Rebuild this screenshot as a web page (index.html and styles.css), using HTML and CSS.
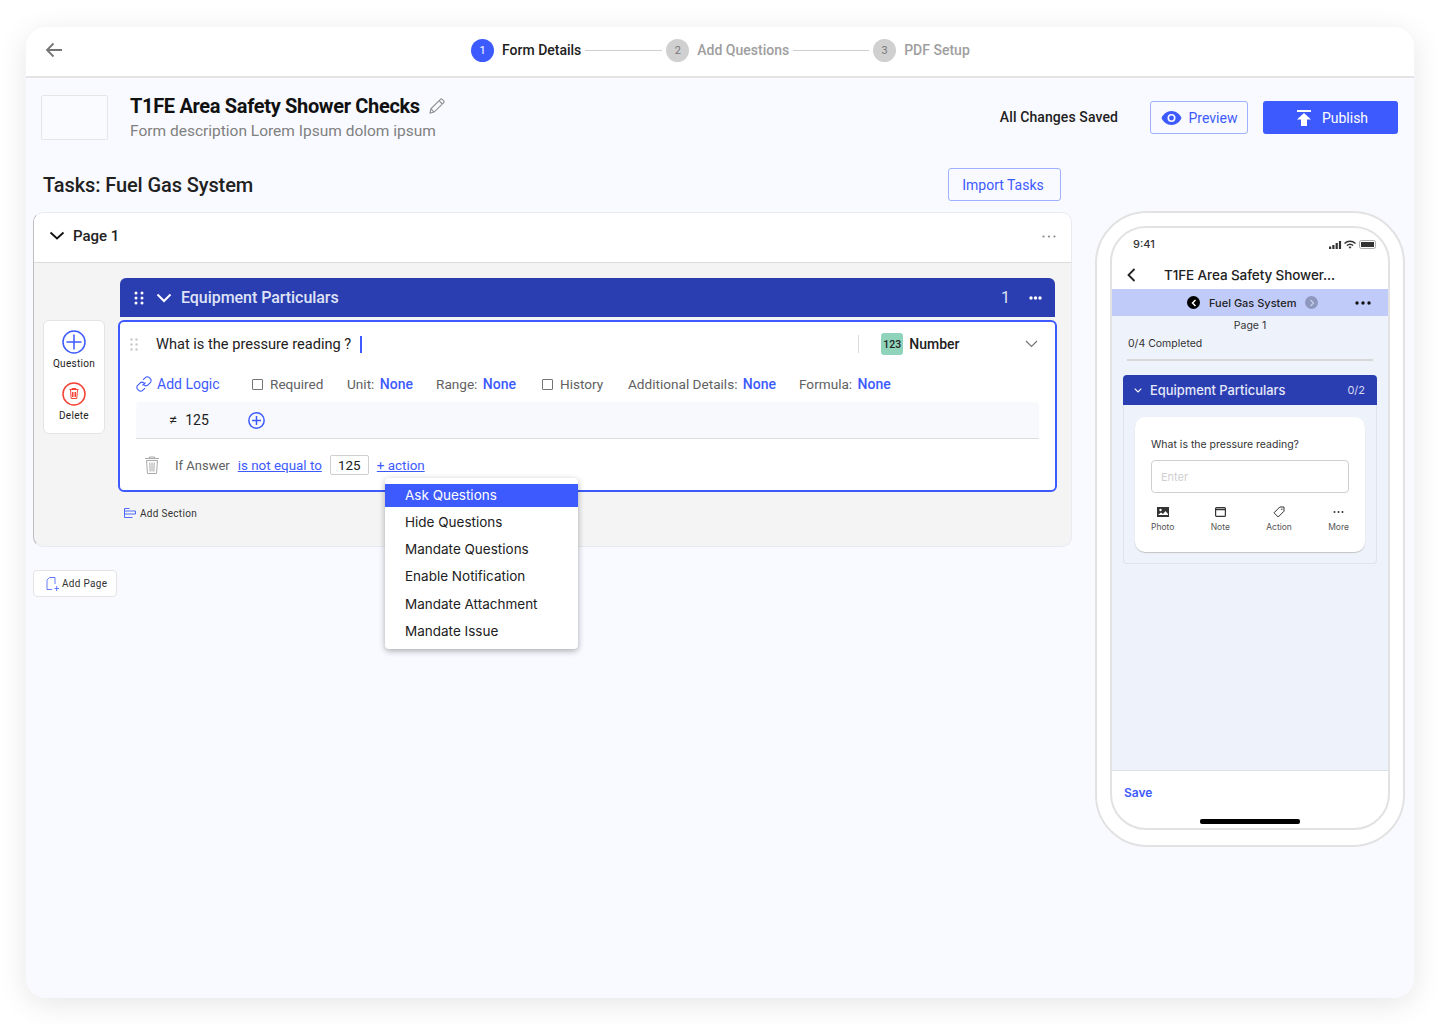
FILE: index.html
```html
<!DOCTYPE html>
<html lang="en">
<head>
<meta charset="utf-8">
<title>Form Builder</title>
<link rel="stylesheet" href="styles.css">
</head>
<body>
<div class="window">
  <header class="topbar">
    <svg class="back" viewBox="0 0 18 16" width="18" height="16"><path d="M17 8H2M8.500 1.500 2 8l6.500 6.500" fill="none" stroke="#757575" stroke-width="1.800"/></svg>
    <div class="stepper">
      <span class="num num-on">1</span><span class="step-on">Form Details</span><span class="line"></span>
      <span class="num">2</span><span class="step-off">Add Questions</span><span class="line line-b"></span>
      <span class="num">3</span><span class="step-off">PDF Setup</span>
    </div>
  </header>

  <section class="formhead">
    <div class="logo"></div>
    <div class="titles">
      <div class="title-row">
        <h1>T1FE Area Safety Shower Checks</h1>
        <svg width="16" height="16" viewBox="0 0 16 16"><path d="M1 15l.9-4.200L11.400 1.300a1.300 1.300 0 0 1 1.800 0l1.500 1.500a1.300 1.300 0 0 1 0 1.800L5.200 14.100zM1.900 10.800l3.300 3.300M10 2.700l3.300 3.300" fill="none" stroke="#8f8f8f" stroke-width="1.100"/></svg>
      </div>
      <p>Form description Lorem Ipsum dolom ipsum</p>
    </div>
    <div class="saved">All Changes Saved</div>
    <button class="btn-outline preview">
      <svg width="21" height="14" viewBox="0 0 21 14"><path d="M10.500 0C6 0 2.200 2.900.500 7c1.700 4.100 5.500 7 10 7s8.300-2.900 10-7c-1.700-4.100-5.500-7-10-7z" fill="#3d5afe"/><circle cx="10.500" cy="7" r="4" fill="#f9faff"/><circle cx="10.500" cy="7" r="2.400" fill="#3d5afe"/></svg>
      Preview
    </button>
    <button class="btn-solid">
      <svg width="14" height="16" viewBox="0 0 14 16"><path d="M0 0h14v2H0zM7 3l7 6.500H10V16H4V9.500H0z" fill="#fff"/></svg>
      Publish
    </button>
  </section>

  <div class="workspace">
    <main class="builder">
      <div class="tasks-row">
        <h2>Tasks: Fuel Gas System</h2>
        <button class="btn-outline import">Import Tasks</button>
      </div>

      <section class="page-card">
        <div class="page-head">
          <svg width="16" height="10" viewBox="0 0 16 10"><path d="M1.500 1.500 8 7.500l6.500-6" fill="none" stroke="#111" stroke-width="1.800"/></svg>
          <span class="page-name">Page 1</span>
          <svg width="14" height="3" viewBox="0 0 14 3" fill="#8a8a8a"><circle cx="1.500" cy="1.500" r="1.100"/><circle cx="7" cy="1.500" r="1.100"/><circle cx="12.500" cy="1.500" r="1.100"/></svg>
        </div>
        <div class="page-body">
          <aside class="tools">
            <div class="tool">
              <svg width="24" height="24" viewBox="0 0 24 24"><circle cx="12" cy="12" r="11" fill="none" stroke="#3d5afe" stroke-width="1.500"/><path d="M12 4.500v15M4.500 12h15" stroke="#3d5afe" stroke-width="1.500"/></svg>
              <span>Question</span>
            </div>
            <div class="tool">
              <svg width="24" height="24" viewBox="0 0 24 24"><circle cx="12" cy="12" r="11" fill="none" stroke="#f44336" stroke-width="1.500"/><path d="M7.500 7.500h9M8.500 7.500l.7 9h5.600l.7-9M10.500 10v5M12 10v5M13.500 10v5M10 7.500V6.500h4v1" fill="none" stroke="#f44336" stroke-width="1"/></svg>
              <span>Delete</span>
            </div>
          </aside>

          <div class="sections">
            <div class="section-head">
              <svg width="10" height="14" viewBox="0 0 10 14" fill="#fff"><circle cx="2" cy="2" r="1.500"/><circle cx="8" cy="2" r="1.500"/><circle cx="2" cy="7" r="1.500"/><circle cx="8" cy="7" r="1.500"/><circle cx="2" cy="12" r="1.500"/><circle cx="8" cy="12" r="1.500"/></svg>
              <svg class="sec-chev" width="16" height="10" viewBox="0 0 16 10"><path d="M1.500 1.500 8 8l6.500-6.500" fill="none" stroke="#fff" stroke-width="2"/></svg>
              <span class="sec-title">Equipment Particulars</span>
              <span class="sec-count">1</span>
              <svg width="13" height="4" viewBox="0 0 13 4" fill="#fff"><circle cx="2" cy="2" r="1.700"/><circle cx="6.500" cy="2" r="1.700"/><circle cx="11" cy="2" r="1.700"/></svg>
            </div>

            <div class="question">
              <div class="q-row">
                <svg width="8" height="13" viewBox="0 0 8 13" fill="#c9c9c9"><circle cx="1.500" cy="1.500" r="1.200"/><circle cx="6.500" cy="1.500" r="1.200"/><circle cx="1.500" cy="6.500" r="1.200"/><circle cx="6.500" cy="6.500" r="1.200"/><circle cx="1.500" cy="11.500" r="1.200"/><circle cx="6.500" cy="11.500" r="1.200"/></svg>
                <span class="q-text">What is the pressure reading ?</span>
                <span class="caret"></span>
                <span class="q-sep"></span>
                <span class="badge">123</span>
                <span class="q-type">Number</span>
                <svg width="13" height="8" viewBox="0 0 13 8"><path d="M1 1l5.500 5.500L12 1" fill="none" stroke="#757575" stroke-width="1.200"/></svg>
              </div>

              <div class="opts">
                <span class="addlogic">
                  <svg width="16" height="16" viewBox="0 0 16 16"><path d="M6.500 9.500 9.500 6.500M7 3.800 9.300 1.600a2.800 2.800 0 0 1 4 0l1 1a2.800 2.800 0 0 1 0 4l-2.300 2.300a2.800 2.800 0 0 1-3.800.1M9 12.200l-2.300 2.200a2.800 2.800 0 0 1-4 0l-1-1a2.800 2.800 0 0 1 0-4L4 7.100a2.800 2.800 0 0 1 3.800-.1" fill="none" stroke="#3d5afe" stroke-width="1.100"/></svg>
                  Add Logic
                </span>
                <label class="opt req"><i class="check"></i>Required</label>
                <span class="opt unit">Unit: <b>None</b></span>
                <span class="opt range">Range: <b>None</b></span>
                <label class="opt hist"><i class="check"></i>History</label>
                <span class="opt addl">Additional Details: <b>None</b></span>
                <span class="opt">Formula: <b>None</b></span>
              </div>

              <div class="logic-strip">
                <span class="ne">≠</span>
                <span class="logic-val">125</span>
                <svg width="17" height="17" viewBox="0 0 16 16"><circle cx="8" cy="8" r="7.200" fill="none" stroke="#3d5afe" stroke-width="1.400"/><path d="M8 3.800v8.400M3.800 8h8.400" stroke="#3d5afe" stroke-width="1.400"/></svg>
              </div>

              <div class="rule">
                <svg width="16" height="18" viewBox="0 0 16 18"><path d="M1 2.500h14M2.500 4.500l1 13h9l1-13zM5.800 6.500l.3 9M8 6.500v9M10.200 6.500l-.3 9M5.500 2.500V1h5v1.500" fill="none" stroke="#a8a8a8" stroke-width="1"/></svg>
                <span class="if">If Answer</span>
                <a class="lnk">is not equal to</a>
                <span class="valbox">125</span>
                <a class="lnk">+ action</a>
              </div>

              <ul class="menu">
                <li class="active">Ask Questions</li>
                <li>Hide Questions</li>
                <li>Mandate Questions</li>
                <li>Enable Notification</li>
                <li>Mandate Attachment</li>
                <li>Mandate Issue</li>
              </ul>
            </div>

            <div class="add-section">
              <svg width="12" height="11" viewBox="0 0 12 11"><path d="M.5.500h5M.5 3h11M.5 6h11M.5 9.500h8M.5.500v9M11.500 3v3" fill="none" stroke="#3d5afe" stroke-width=".9"/></svg>
              Add Section
            </div>
          </div>
        </div>
      </section>

      <button class="add-page">
        <svg width="13" height="14" viewBox="0 0 13 14"><path d="M3.500 .500h5.500v6.500M3.500 .500 1 3v9.500h5M8.500 11.500h4.500M10.700 9v5" fill="none" stroke="#3d5afe" stroke-width=".8"/></svg>
        Add Page
      </button>
    </main>

    <aside class="phone">
      <div class="screen">
        <div class="status">
          <span class="time">9:41</span>
          <svg width="50" height="9" viewBox="0 0 50 9">
            <path d="M1 6.500h2.200V9H1zM4.300 5h2.200v4H4.300zM7.600 3h2.200v6H7.600zM10.900 1h2.200v8h-2.200z" fill="#333"/>
            <path d="M16.500 3.500a8 8 0 0 1 11 0M18.800 5.500a5 5 0 0 1 6.400 0" fill="none" stroke="#333" stroke-width="1.400"/><path d="M20.500 7l1.500-.7 1.500.7L22 8.800z" fill="#333"/>
            <rect x="31.500" y=".5" width="16" height="8" rx="1.800" fill="#fff" stroke="#999" stroke-width=".8"/><rect x="33" y="2" width="13" height="5" fill="#333"/>
          </svg>
        </div>
        <div class="ph-title">
          <svg width="9" height="14" viewBox="0 0 9 14"><path d="M7.500 1 1.500 7l6 6" fill="none" stroke="#222" stroke-width="1.800"/></svg>
          <span>T1FE Area Safety Shower...</span>
        </div>
        <div class="ph-body">
          <div class="ph-bar">
            <span class="ph-nav dark"><svg width="6" height="8" viewBox="0 0 6 8"><path d="M4.500 1 1.500 4l3 3" fill="none" stroke="#fff" stroke-width="1.500"/></svg></span>
            <span class="ph-sys">Fuel Gas System</span>
            <span class="ph-nav grey"><svg width="6" height="8" viewBox="0 0 6 8"><path d="M1.500 1l3 3-3 3" fill="none" stroke="#c8cfe6" stroke-width="1.200"/></svg></span>
            <svg class="ph-dots" width="16" height="4" viewBox="0 0 16 4" fill="#111"><circle cx="2" cy="2" r="1.700"/><circle cx="8" cy="2" r="1.700"/><circle cx="14" cy="2" r="1.700"/></svg>
          </div>
          <div class="ph-page">Page 1</div>
          <div class="ph-done">0/4 Completed</div>
          <div class="ph-progress"></div>
          <div class="ph-sec">
            <div class="ph-sec-head">
              <svg width="8" height="5" viewBox="0 0 8 5"><path d="M.7.700 4 4 7.300.700" fill="none" stroke="#fff" stroke-width="1.100"/></svg>
              <span class="ph-sec-title">Equipment Particulars</span>
              <span class="ph-sec-count">0/2</span>
            </div>
            <div class="ph-sec-body">
              <div class="ph-card">
                <div class="ph-q">What is the pressure reading?</div>
                <div class="ph-input">Enter</div>
                <div class="ph-actions">
                  <div class="ph-act"><svg width="12" height="10" viewBox="0 0 12 10"><path d="M0 0h12v10H0z" fill="#333"/><circle cx="3.500" cy="3" r="1.200" fill="#fff"/><path d="M1 8l3-2.500 2 1.500 2.500-3L11 7v1z" fill="#fff"/></svg><span>Photo</span></div>
                  <div class="ph-act"><svg width="11" height="10" viewBox="0 0 11 10"><rect x=".6" y=".6" width="9.800" height="8.800" rx="1" fill="none" stroke="#333" stroke-width="1.200"/><path d="M.6 2.500h9.800" stroke="#333" stroke-width="1.500"/></svg><span>Note</span></div>
                  <div class="ph-act"><svg width="12" height="12" viewBox="0 0 12 12"><path d="M6.800 1H11v4.200L5.200 11 1 6.800z" fill="none" stroke="#333" stroke-width="1"/><circle cx="8.800" cy="3.200" r=".7" fill="#333"/></svg><span>Action</span></div>
                  <div class="ph-act"><svg width="11" height="10" viewBox="0 0 11 10" fill="#333"><circle cx="1.500" cy="5" r="1"/><circle cx="5.500" cy="5" r="1"/><circle cx="9.500" cy="5" r="1"/></svg><span>More</span></div>
                </div>
              </div>
            </div>
          </div>
        </div>
        <div class="ph-foot">
          <span class="ph-save">Save</span>
          <span class="home"></span>
        </div>
      </div>
    </aside>
  </div>
</div>
</body>
</html>
```
FILE: styles.css
```css
* { box-sizing: border-box; }
html, body { margin: 0; padding: 0; background: #fff; }
body { width: 1440px; height: 1024px; padding: 27px 26px 26px; overflow: hidden; font-family: Roboto, "Liberation Sans", sans-serif; color: #212121; }
h1, h2, p, ul { margin: 0; padding: 0; }
button { font-family: inherit; cursor: pointer; }
a { cursor: pointer; }

.window { width: 1388px; height: 971px; background: #f9faff; border-radius: 20px; box-shadow: 0 6px 30px rgba(0,0,0,.1); overflow: hidden; }

.topbar { height: 51px; background: #fff; border-bottom: 2px solid #e4e4e4; display: flex; align-items: center; padding: 0 0 3px 19px; }
.back { flex: none; }
.stepper { margin-left: 408px; display: flex; align-items: center; font-size: 14px; font-weight: 500; }
.num { width: 23px; height: 23px; border-radius: 50%; background: #d0d0d0; color: #777; font-size: 11px; font-weight: 400; display: flex; align-items: center; justify-content: center; margin-right: 8px; }
.num-on { background: #3d5afe; color: #fff; }
.step-on { color: #212121; }
.step-off { color: #9e9e9e; }
.line { width: 77px; height: 1px; background: #cfcfcf; margin: 0 4px; }
.line-b { width: 76px; }

.formhead { display: flex; align-items: flex-start; padding: 17px 16px 0 15px; height: 90px; }
.logo { width: 67px; height: 45px; border: 1px solid #e6e6e6; border-radius: 2px; background: #fafbff; flex: none; }
.titles { margin-left: 22px; flex: 1; }
.title-row { display: flex; align-items: center; gap: 9px; height: 22px; }
h1 { font-size: 20px; font-weight: 700; color: #111; letter-spacing: -.33px; }
.titles p { font-size: 15.500px; color: #808080; margin-top: 4px; line-height: 20px; }
.saved { font-size: 14px; font-weight: 500; letter-spacing: .1px; color: #212121; margin: 6px 32px 0 0; line-height: 33px; height: 33px; }
.btn-outline { border: 1px solid #9fb0fc; border-radius: 3px; background: transparent; color: #3d5afe; font-size: 14px; display: flex; align-items: center; justify-content: center; }
.preview { width: 98px; height: 33px; margin-top: 6px; gap: 7px; }
.btn-solid { width: 135px; height: 33px; margin: 6px 0 0 15px; padding: 0 0 0 4px; background: #3d5afe; border: 0; border-radius: 3px; color: #fff; font-size: 14px; display: flex; align-items: center; justify-content: center; gap: 11px; }

.workspace { display: flex; align-items: flex-start; padding-left: 7px; }
.builder { width: 1039px; flex: none; }
.tasks-row { display: flex; align-items: center; justify-content: space-between; height: 33px; padding: 0 11px 0 10px; margin-bottom: 11px; }
h2 { font-size: 20px; font-weight: 500; color: #212121; letter-spacing: -.1px; }
.import { width: 113px; height: 33px; padding: 0 3px 0 0; }

.page-card { border: 1px solid #e9e9ef; border-left: 1px solid #bdbdbd; border-radius: 10px; background: #f4f4f4; height: 335px; }
.page-head { height: 50px; background: #fff; border-bottom: 1px solid #dcdcdc; border-radius: 9px 9px 0 0; display: flex; align-items: center; padding: 0 15px 3px 15px; }
.page-name { font-size: 15px; font-weight: 500; color: #212121; margin-left: 8px; flex: 1; }

.page-body { display: flex; align-items: flex-start; padding: 15px 0 0 9px; }
.tools { width: 62px; height: 114px; margin-top: 42px; background: #fff; border: 1px solid #e4e4e4; border-radius: 6px; display: flex; flex-direction: column; align-items: center; padding-top: 9px; gap: 12px; flex: none; }
.tool { display: flex; flex-direction: column; align-items: center; gap: 4px; font-size: 10px; line-height: 12px; color: #212121; letter-spacing: .3px; }
.sections { width: 939px; margin-left: 13px; }

.section-head { width: 935px; margin-left: 2px; height: 39px; background: #2b3eb1; border-radius: 6px 6px 0 0; display: flex; align-items: center; padding: 0 13px 0 14px; color: #fff; }
.sec-chev { margin-left: 12px; }
.sec-title { margin-left: 9px; font-size: 16px; font-weight: 500; color: #dfe3f7; flex: 1; letter-spacing: -.05px; }
.sec-count { font-size: 16px; color: #dfe3f7; margin-right: 19px; }

.question { position: relative; margin-top: 3px; height: 172px; background: #fff; border: 2px solid #3d5afe; border-radius: 6px; }
.q-row { height: 44px; display: flex; align-items: center; padding-left: 10px; }
.q-text { margin-left: 18px; font-size: 14.600px; color: #212121; }
.caret { width: 2px; height: 17px; background: #3d5afe; margin-left: 9px; }
.q-sep { width: 1px; height: 18px; background: #dcdcdc; margin-left: 496px; }
.badge { margin-left: 22px; width: 22px; height: 22px; border-radius: 3px; background: #8fd3bb; font-size: 10.500px; font-weight: 500; display: flex; align-items: center; justify-content: center; color: #222; }
.q-type { margin-left: 6px; width: 116px; font-size: 14px; font-weight: 500; color: #212121; }

.opts { height: 36px; padding: 0 0 0 16px; display: flex; align-items: center; font-size: 13.600px; color: #616161; }
.addlogic { color: #3d5afe; font-size: 14px; display: flex; align-items: center; gap: 5px; width: 116px; }
.opt { display: flex; align-items: center; white-space: pre; }
.opt b { color: #3d5afe; font-weight: 500; font-size: 14px; margin-left: 2px; }
.check { width: 11px; height: 11px; border: 1.200px solid #757575; border-radius: 1px; margin-right: 7px; }
.req { width: 95px; }
.unit { width: 89px; }
.range { width: 106px; }
.hist { width: 86px; }
.addl { width: 171px; }

.logic-strip { margin: 0 16px; height: 37px; background: #f8f9fd; border-bottom: 1px solid #dedede; border-radius: 4px 4px 0 0; display: flex; align-items: center; font-size: 14px; color: #212121; }
.ne { margin-left: 33px; font-size: 15px; line-height: 15px; }
.logic-val { margin-left: 8px; width: 63px; }

.rule { height: 52px; padding-left: 24px; display: flex; align-items: center; font-size: 13.400px; color: #616161; }
.if { margin-left: 15px; font-size: 13px; }
.lnk { color: #3d5afe; text-decoration: underline; margin-left: 8px; }
.valbox { margin-left: 8px; width: 39px; height: 20px; border: 1px solid #cfcfcf; border-radius: 2px; background: #fff; color: #212121; display: flex; align-items: center; justify-content: center; }

.menu { position: absolute; left: 265px; top: 156px; width: 193px; height: 171px; list-style: none; background: #fff; border-radius: 4px; padding: 6px 0; box-shadow: 0 2px 6px rgba(0,0,0,.32); font-family: Inter, Roboto, sans-serif; font-size: 13.500px; color: #212121; z-index: 2; }
.menu li { height: 27.300px; padding-left: 20px; display: flex; align-items: center; }
.menu li.active { height: 23px; padding-bottom: 1px; background: #3d5afe; color: #fff; margin-bottom: 1px; }

.add-section { display: flex; align-items: center; gap: 4px; font-size: 10px; color: #333; letter-spacing: .3px; margin: 16px 0 0 6px; }

.add-page { margin-top: 23px; width: 84px; height: 27px; background: #fff; border: 1px solid #e4e4e4; border-radius: 4px; font-size: 10px; letter-spacing: .3px; color: #333; display: flex; align-items: center; gap: 3px; padding-left: 12px; }

.phone { width: 310px; height: 636px; margin: 43px 0 0 23px; flex: none; background: #fff; border: 2px solid #e2e2e2; border-radius: 52px; padding: 13px; font-family: Inter, Roboto, sans-serif; }
.screen { height: 604px; border: 2px solid #e2e2e2; border-radius: 36px; overflow: hidden; display: flex; flex-direction: column; background: #fff; }
.status { height: 30px; flex: none; display: flex; align-items: center; justify-content: space-between; padding: 2px 10px 0 21px; }
.time { font-size: 11px; color: #333; font-weight: 500; }
.ph-title { height: 31px; flex: none; display: flex; align-items: center; padding: 2px 0 0 15px; font-size: 13.500px; font-weight: 500; color: #222; }
.ph-title span { margin-left: 28px; letter-spacing: -.1px; }
.ph-body { flex: 1; background: #eef2fb; border-bottom: 1px solid #dde0e6; }
.ph-bar { height: 27px; background: #c1cbfa; display: flex; align-items: center; padding-left: 75px; font-size: 11px; font-weight: 500; color: #222; }
.ph-nav { width: 13px; height: 13px; border-radius: 50%; display: flex; align-items: center; justify-content: center; }
.dark { background: #000; }
.grey { background: #8e97bd; margin-left: 9px; }
.ph-sys { margin-left: 9px; }
.ph-dots { margin-left: 37px; }
.ph-page { text-align: center; font-size: 10.500px; color: #333; margin-top: 3px; line-height: 14px; }
.ph-done { font-size: 10.500px; color: #333; margin: 4px 0 0 16px; line-height: 14px; }
.ph-progress { height: 2px; background: #d8d8d8; margin: 8px 15px 0; }
.ph-sec { margin: 14px 11px 0; }
.ph-sec-head { height: 30px; background: #2b3eb1; border-radius: 4px 4px 0 0; display: flex; align-items: center; padding: 0 12px 0 11px; color: #fff; font-size: 12.900px; font-weight: 500; }
.ph-sec-title { margin-left: 8px; flex: 1; color: #e6e9fa; }
.ph-sec-count { font-size: 11px; font-weight: 400; color: #d8dcf2; }
.ph-sec-body { height: 159px; border: 1px solid #dfe3ec; border-top: 0; border-radius: 0 0 4px 4px; padding: 12px 11px 0; }
.ph-card { height: 135px; background: #fff; border-radius: 10px; box-shadow: 0 1px 1px #c4c4c4; padding: 21px 16px 0; }
.ph-q { font-size: 10.500px; color: #333; line-height: 14px; }
.ph-input { margin-top: 8px; height: 33px; border: 1px solid #cfcfcf; border-radius: 4px; font-size: 11px; color: #cfcfcf; padding-left: 9px; display: flex; align-items: center; }
.ph-actions { display: flex; justify-content: space-between; margin-top: 13px; }
.ph-act { display: flex; flex-direction: column; align-items: center; gap: 4px; font-size: 8.500px; color: #555; }
.ph-act svg { height: 12px; }
.ph-foot { height: 57px; flex: none; position: relative; }
.ph-save { position: absolute; left: 12px; top: 14px; font-size: 12px; font-weight: 600; color: #3d5afe; }
.home { position: absolute; bottom: 4px; left: 88px; width: 100px; height: 5px; border-radius: 2px; background: #000; }
```
